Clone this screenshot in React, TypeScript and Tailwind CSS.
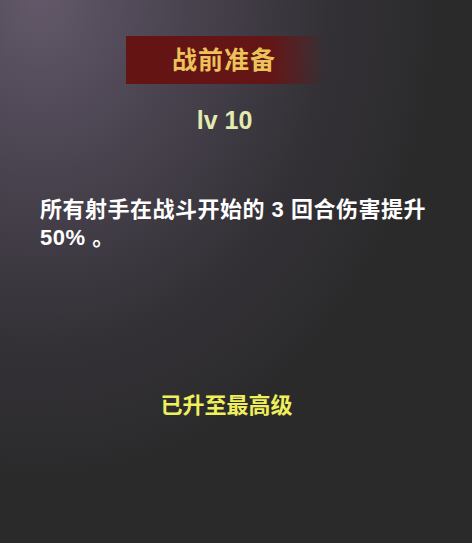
import React from 'react';

const stack = { fontFamily: '"Liberation Sans", "Noto Sans CJK SC", sans-serif' };

const SkillDetail: React.FC = () => {
  return (
    <div
      className="w-[472px] h-[543px] overflow-hidden bg-[radial-gradient(ellipse_400px_480px_at_40px_0px,#625869_0%,#4c4552_32%,#333136_72%,#2b2a2b_100%)]"
      style={stack}
    >
      <div className="flex flex-col">
        {/* title ribbon */}
        <div className="mt-[36px] ml-[126px] h-[48px] w-[200px] flex items-center bg-[linear-gradient(90deg,#651414_0%,#641515_72%,rgba(100,21,21,0.5)_87%,rgba(100,21,21,0)_100%)]">
          <span className="ml-[46px] text-[25px] font-bold leading-none text-[#ecc35a] tracking-[1px]">
            战前准备
          </span>
        </div>

        <div className="mt-[24px] flex justify-center">
          <span className="text-[25px] font-bold leading-none text-[#e4ebb0] pr-[23px]">lv 10</span>
        </div>

        <p className="mt-[63px] pl-[40px] text-[22px] font-bold leading-[28px] tracking-[0.5px] whitespace-nowrap text-white">
          所有射手在战斗开始的 3 回合伤害提升
          <br />
          50% 。
        </p>

        <div className="mt-[143px] flex justify-center">
          <span className="text-[22px] font-bold leading-none text-[#f0ef5c] pr-[19px]">已升至最高级</span>
        </div>
      </div>
    </div>
  );
};

export default function App() {
  return <SkillDetail />;
}
